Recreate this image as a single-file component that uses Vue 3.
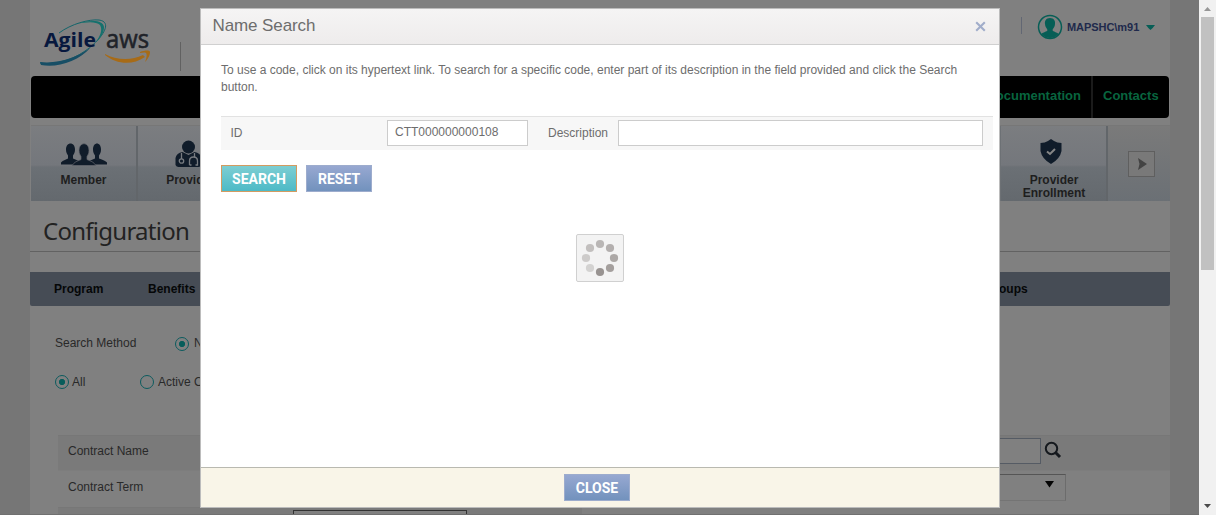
<script setup>
const dots = [
  [24, 10, '#b9b6b5'], [34, 14, '#b3afae'], [38, 24, '#aca8a6'], [34, 34, '#a49f9d'],
  [24, 38, '#989391'], [14, 34, '#d3d2d1'], [10, 24, '#cdcbca'], [14, 14, '#c2bfbe'],
]
</script>

<template>
  <div class="screen">
    <div class="viewport">
      <div class="page">
        <header class="header">
          <svg class="logo" width="112" height="60" viewBox="0 0 112 60">
            <path d="M19 20 C31 11 49 6 59 7 C74 9 61 27 45 38 C30 49 9 52 0 50" fill="none" stroke="#14656b" stroke-width="1" />
            <path d="M36 11 C49 7 63 6 64 14 C64 19 61 25 56 29 C60 23 63 17 60 12 C56 8 46 9 36 11Z" fill="#14716d" />
            <path d="M0 49 C18 51 37 45 51 34 C38 49 17 55 1 52Z" fill="#174e65" />
            <text x="4" y="33.500" class="agile" textLength="52" lengthAdjust="spacingAndGlyphs">Agile</text>
            <text x="66" y="34.500" class="aws" textLength="43" lengthAdjust="spacingAndGlyphs">aws</text>
            <path d="M65 41 C76 47 91 48 103 42 L105 44 C92 53 76 51 65 42Z" fill="#a76b17" />
            <path d="M100 39 C105 37 110 37 110 39 C110 43 107 47 105 49 C107 44 107 41 106 40 C104 39 102 40 100 40Z" fill="#a76b17" />
          </svg>
          <i class="logo-rule"></i>
          <div class="account">
            <svg width="26" height="26" viewBox="0 0 26 26">
              <circle cx="13" cy="13" r="11.500" fill="none" stroke="#075e56" stroke-width="1.500" />
              <path d="M13 4 C9 4 7.500 7 8 10 C8 13 10 14 10.500 16 C10 18 6 18 4.500 20 Q8 24 13 24 Q18 24 21.500 20 C20 18 16 18 15.500 16 C16 14 18 13 18 10 C18.500 7 17 4 13 4Z" fill="#075e56" />
            </svg>
            <b>MAPSHC\m91</b>
            <svg class="caret" width="9" height="6" viewBox="0 0 9 6"><path d="M0 1 H9 Q7 4 4.500 6 Q2 4 0 1Z" fill="#075e56" /></svg>
          </div>
        </header>
        <nav class="topnav"><b class="doc">Documentation</b><b class="contact">Contacts</b></nav>
        <div class="tiles">
          <div class="tile first">
            <svg width="46" height="24" viewBox="0 0 46 24">
              <g fill="#101c2a">
                <path d="M5 7 C5 -1 14 -1 14 7 C14 10 13 11 12 13 V16 L19 19 V22 H0 V20 Q2 18 7 16 V13 C6 11 5 10 5 7Z" />
                <path d="M32 7 C32 -1 40 -1 40 7 C40 10 39 11 38 13 V16 Q44 18 46 20 V22 H27 V19 L34 16 V13 C33 11 32 10 32 7Z" />
                <path d="M18 8 C18 -1 28 -1 28 8 C28 11 27 12 26 14 V17 Q33 19 35 23 H11 Q13 19 20 17 V14 C19 12 18 11 18 8Z" stroke="#656970" stroke-width=".7" />
              </g>
            </svg>
            <b>Member</b>
          </div>
          <div class="tile doctor">
            <svg width="26" height="27" viewBox="0 0 26 27">
              <circle cx="13" cy="7" r="6.500" fill="#101c2a" />
              <path d="M0 25 V18 Q1 13 7 12 L13 15 L19 12 Q25 13 26 18 V25 Q25 27 23 27 H3 Q1 27 0 25Z" fill="#101c2a" />
              <g fill="none" stroke="#777b80" stroke-width="1.300"><path d="M6 13 V19" /><circle cx="6" cy="21" r="2.200" /><path d="M19 13 V17 M14 25 V21 Q14 17 18 17 Q22 17 22 21 V25 H20 M14 25 H16" /></g>
            </svg>
            <b>Provider</b>
          </div>
          <div class="hidden-tiles"></div>
          <div class="tile enrollment">
            <svg width="22" height="25" viewBox="0 0 22 25">
              <path d="M11 0 L14 2 Q17 4 21.500 4 V12 Q20 20 11 25 Q2 20 .5 12 V4 Q5 4 8 2Z" fill="#101c2a" />
              <path d="M7 12.500 L10 15 L15 10" fill="none" stroke="#858585" stroke-width="2" />
            </svg>
            <b>Provider<br>Enrollment</b>
          </div>
          <div class="next"><span><svg width="10" height="12" viewBox="0 0 10 12"><path d="M0 0 L9 6 L0 12 L1.500 6Z" fill="#434343" /></svg></span></div>
        </div>
        <h1>Configuration</h1>
        <nav class="subnav"><b class="program">Program</b><b class="benefits">Benefits</b><b class="groups">Groups</b></nav>
        <div class="choices method"><span class="method-label">Search Method</span><i class="radio on"></i><span>Name</span></div>
        <div class="choices status"><i class="radio on"></i><span class="all">All</span><i class="radio"></i><span>Active Only</span></div>
        <div class="form">
          <div class="row shaded"><span>Contract Name</span><div class="field name-field"></div>
            <svg width="18" height="18" viewBox="0 0 18 18"><circle cx="7.500" cy="7.500" r="5.700" fill="none" stroke="#15191e" stroke-width="2" /><path d="M11.500 11.500 L16 16" stroke="#15191e" stroke-width="3" /></svg>
          </div>
          <div class="row term"><span>Contract Term</span><div class="field select"><svg width="9" height="7" viewBox="0 0 9 7"><path d="M0 0 H9 L4.500 6.500Z" fill="#050505" /></svg></div></div>
          <div class="row shaded last"><div class="field"></div></div>
        </div>
      </div>
    </div>
    <div class="scrollbar">
      <svg width="17" height="17" viewBox="0 0 17 17"><path d="M5 11 L8.500 7 L12 11Z" fill="#969696" /></svg>
      <div class="thumb"></div>
      <svg class="down" width="17" height="17" viewBox="0 0 17 17"><path d="M5 6 L8.500 10 L12 6Z" fill="#4b4b4b" /></svg>
    </div>

    <section class="dialog">
      <div class="dialog-head"><span>Name Search</span>
        <svg width="11" height="11" viewBox="0 0 11 11"><path d="M1.200 1.200 L9.800 9.800 M9.800 1.200 L1.200 9.800" stroke="#a1adca" stroke-width="2.100" /></svg>
      </div>
      <div class="dialog-body">
        <p>To use a code, click on its hypertext link. To search for a specific code, enter part of its description in the field provided and click the Search<br>button.</p>
        <div class="criteria"><label class="id-label">ID</label><div class="input id-input">CTT000000000108</div><label class="desc-label">Description</label><div class="input desc-input"></div></div>
        <div class="actions"><button class="search">SEARCH</button><button class="reset">RESET</button></div>
        <div class="loader"><svg width="46" height="46" viewBox="1 1 46 46"><circle v-for="([x, y, c], i) in dots" :key="i" :cx="x" :cy="y" r="4.100" :fill="c" /></svg></div>
      </div>
      <div class="dialog-foot"><button class="close">CLOSE</button></div>
    </section>
  </div>
</template>

<style>
body { margin: 0; overflow: hidden; }
</style>

<style scoped>
* { box-sizing: border-box; }
svg { display: block; flex: none; }
.screen { position: relative; display: flex; width: 1216px; height: 515px; overflow: hidden; font: 12px/14px "Liberation Sans", Arial, sans-serif; color: #292929; }
.viewport { width: 1199px; height: 515px; padding-left: 30px; background: #767676; overflow: hidden; border-bottom: 1px solid #707070; }
.page { display: flex; flex-direction: column; width: 1140px; height: 515px; background: #808080; }
.header { height: 76px; flex: none; display: flex; }
.logo { margin: 13px 0 0 10px; }
.agile { font: bold 20px "Open Sans", sans-serif; fill: #07183e; }
.aws { font: 26px "Open Sans", sans-serif; fill: #202329; stroke: #202329; stroke-width: .6; }
.logo-rule { width: 1px; height: 29px; background: #616161; margin: 42px 0 0 28px; }
.account { margin: 14px 15px 0 auto; padding-left: 16px; height: 26px; display: flex; align-items: center; color: #202a4c; font-size: 11px; background: linear-gradient(#626773, #626773) 0 3px / 1px 17px no-repeat; }
.account b { width: 74px; margin-left: 4px; letter-spacing: -.05px; }
.caret { margin-left: 5px; }
.topnav { flex: none; height: 42px; margin: 0 1px; border-radius: 4px; background: #000; display: flex; justify-content: flex-end; font-size: 13px; line-height: 39px; color: #08653f; }
.doc { padding-right: 10px; }
.contact { border-left: 2px solid #1b1b1b; width: 78px; padding-left: 10px; white-space: nowrap; }
.tiles { flex: none; display: flex; height: 75px; margin: 8px 0 0 1px; box-shadow: 0 -1px #777; }
.tile { flex: none; width: 107px; height: 75px; border-right: 2px solid #62666a; background: linear-gradient(#7b7d80 0, #74777c 39px, #6b7075 41px, #64696e 100%); display: flex; flex-direction: column; align-items: center; text-align: center; line-height: 13px; }
.tile svg { height: 25px; margin-top: 15px; }
.tile b { margin-top: 8px; color: #1e1e1e; }
.tile.first svg { margin-top: 16px; margin-bottom: -1px; }
.tile.doctor svg { width: 27px; height: 27px; margin: 14px 4px -1px 0; }
.hidden-tiles { width: 756px; background: #6d7175; }
.enrollment svg { margin: 13px 6px 0 0; }
.enrollment b { margin: 10px 0 0 1px; }
.next { flex: 1; background: linear-gradient(#7a7a7a, #6b7075); padding: 25px 0 0 20px; }
.next span { display: flex; align-items: center; padding-left: 9px; width: 27px; height: 26px; border: 1px solid #5f5f5f; background: #797979; }
h1 { flex: none; margin: 0; height: 51px; border-bottom: 1px solid #626262; padding-left: 13px; font: 24px/60px "Trebuchet MS", "Noto Sans", sans-serif; letter-spacing: -.74px; color: #222; }
.subnav { flex: none; height: 34px; margin-top: 20px; border-radius: 0 0 2px 2px; background: #464c55; display: flex; line-height: 34px; color: #050708; }
.program { margin-left: 24px; width: 94px; }
.benefits { width: 837px; }
.choices { flex: none; display: flex; align-items: center; height: 18px; }
.method { margin: 28px 0 0 25px; }
.method-label { width: 120px; }
.radio { flex: none; width: 14px; height: 14px; border: 1px solid #0c5b5e; border-radius: 50%; margin-right: 5px; }
.radio.on { background: radial-gradient(circle, #075d5b 0 2.800px, transparent 3.300px); }
.method .radio { position: relative; top: 1px; }
.status { margin: 21px 0 0 25px; }
.status .radio { margin-right: 3px; }
.all { width: 68px; }
.status .radio:not(.on) { margin-right: 4px; }
.form { margin: 44px 0 0 28px; }
.row { display: flex; height: 36px; padding: 3px 0 0 10px; }
.row span { line-height: 27px; width: 325px; flex: none; }
.shaded { background: #7a7a7a; border-top: 1px solid #777; border-bottom: 1px solid #7d7d7d; padding-top: 2px; }
.field { border: 1px solid #555b64; height: 26px; background: #808080; }
.name-field { width: 648px; }
.shaded svg { margin: 3px 0 0 3px; }
.term span { line-height: 26px; }
.select { width: 673px; height: 27px; border-color: #555 #6c6c6c #747474; display: flex; justify-content: flex-end; padding: 6px 11px 0; }
.last { padding-left: 235px; width: 524px; }
.last .field { width: 174px; border-color: #333; }
.scrollbar { width: 17px; height: 515px; background: #f1f1f1; display: flex; flex-direction: column; }
.thumb { width: 13px; height: 253px; margin-left: 2px; background: #c1c1c1; }
.down { margin-top: auto; }
.dialog { position: absolute; left: 200px; top: 8px; width: 800px; height: 500px; border: 1px solid #bcbcbc; background: #fff; display: flex; flex-direction: column; color: #6d6d6d; }
.dialog-head { height: 36px; flex: none; border-bottom: 1px solid #d0d0d0; background: linear-gradient(#f5f4f4, #eeecec); display: flex; justify-content: space-between; align-items: center; padding: 0 13px 2px 11.500px; font-size: 17px; }
.dialog-head span { letter-spacing: -.1px; }
.dialog-head svg { margin-top: 1px; }
.dialog-body { flex: 1; padding: 17px 6px 0 20px; }
p { margin: 0; line-height: 17px; white-space: nowrap; }
.criteria { height: 34px; margin-top: 20px; border-top: 1px solid #e2e2e2; background: #f7f7f7; display: flex; padding-top: 3px; }
.id-label { padding-left: 9.500px; width: 166px; line-height: 26px; }
.input { height: 26px; border: 1px solid #ccc; background: #fff; padding-left: 7px; line-height: 23px; }
.id-input { width: 141px; }
.desc-label { padding-left: 20px; width: 90px; line-height: 26px; }
.desc-input { width: 365px; }
.actions { display: flex; gap: 9px; margin-top: 15px; }
button { display: block; margin: 0; padding: 0; height: 27px; border: 1px solid #9daccd; color: #fff; background: linear-gradient(#97a8d1, #7292bd); font: bold 14px/26px Roboto, "Liberation Sans", sans-serif; text-align: center; }
.search { width: 76px; border-color: #d39b60; background: linear-gradient(#7dced3, #4dbac6); }
.reset { width: 66px; }
.loader { width: 48px; height: 48px; border: 1px solid #d0d0d0; border-radius: 2px; background: #f3f3f3; margin: 42px 0 0 355px; }
.dialog-foot { height: 40px; flex: none; border-top: 1px solid #b9b9b0; background: #f9f5e8; padding: 6px 0 0 363px; }
.close { width: 66px; }
</style>
